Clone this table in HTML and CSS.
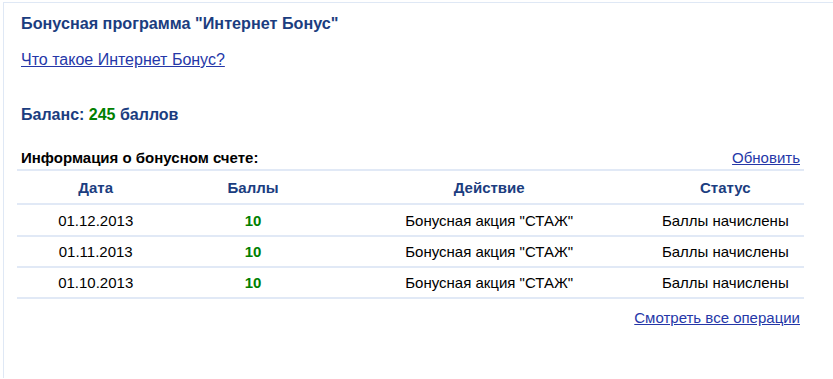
FILE: index.html
```html
<!DOCTYPE html>
<html lang="ru">
<head>
<meta charset="utf-8">
<title>Бонусная программа</title>
<link rel="stylesheet" href="styles.css">
</head>
<body>
<div class="frame">
  <div class="content">
    <h1 class="title">Бонусная программа "Интернет Бонус"</h1>
    <a class="link about" href="#">Что такое Интернет Бонус?</a>
    <div class="balance">Баланс: <span class="green">245</span> баллов</div>
    <div class="info-head">
      <span class="info-title">Информация о бонусном счете:</span>
      <a class="link" href="#">Обновить</a>
    </div>
    <table class="ops">
      <thead>
        <tr><th>Дата</th><th>Баллы</th><th class="wide">Действие</th><th>Статус</th></tr>
      </thead>
      <tbody>
        <tr><td>01.12.2013</td><td class="pts">10</td><td>Бонусная акция "СТАЖ"</td><td>Баллы начислены</td></tr>
        <tr><td>01.11.2013</td><td class="pts">10</td><td>Бонусная акция "СТАЖ"</td><td>Баллы начислены</td></tr>
        <tr><td>01.10.2013</td><td class="pts">10</td><td>Бонусная акция "СТАЖ"</td><td>Баллы начислены</td></tr>
      </tbody>
    </table>
    <div class="all"><a class="link" href="#">Смотреть все операции</a></div>
  </div>
</div>
</body>
</html>
```

FILE: styles.css
```css
html, body {
  margin: 0;
  padding: 0;
  background: #fff;
  font-family: "Liberation Sans", Arial, sans-serif;
  color: #000;
}
.frame {
  margin: 2px 0 0 3px;
  border-top: 1px solid #dfe8f5;
  border-left: 1px solid #dfe8f5;
  height: 376px;
  box-sizing: border-box;
}
.content {
  padding: 8px 29px 0 13px;
}
.title {
  margin: 0;
  font-size: 16.2px;
  font-weight: bold;
  color: #1b3d80;
  line-height: 24px;
  padding-left: 4px;
}
.link {
  color: #2537a8;
  text-decoration: underline;
}
.about {
  display: inline-block;
  margin-top: 16px;
  margin-left: 4px;
  font-size: 16px;
  line-height: 18px;
}
.balance {
  margin-top: 37px;
  padding-left: 4px;
  font-size: 16px;
  font-weight: bold;
  color: #1b3d80;
  line-height: 18px;
}
.green { color: #008000; }
.info-head {
  margin-top: 25px;
  display: flex;
  justify-content: space-between;
  align-items: baseline;
  padding: 0 4px;
  font-size: 15px;
  line-height: 17px;
}
.info-title { font-weight: bold; }
.ops {
  width: 787px;
  margin-top: 3px;
  border-collapse: collapse;
  font-size: 15px;
}
.ops th, .ops td {
  width: 20%;
  text-align: center;
  border-top: 2px solid #e1e9f6;
  padding: 0;
}
.ops th.wide { width: 40%; }
.ops th {
  color: #1b3d80;
  font-weight: bold;
  height: 32px;
}
.ops td { height: 29px; }
.ops tbody tr:first-child td { height: 30px; }
.ops tbody tr:last-child td { border-bottom: 2px solid #e1e9f6; }
.ops td.pts { color: #008000; font-weight: bold; }
.all {
  text-align: right;
  padding-right: 4px;
  margin-top: 10px;
  font-size: 15px;
}
```
